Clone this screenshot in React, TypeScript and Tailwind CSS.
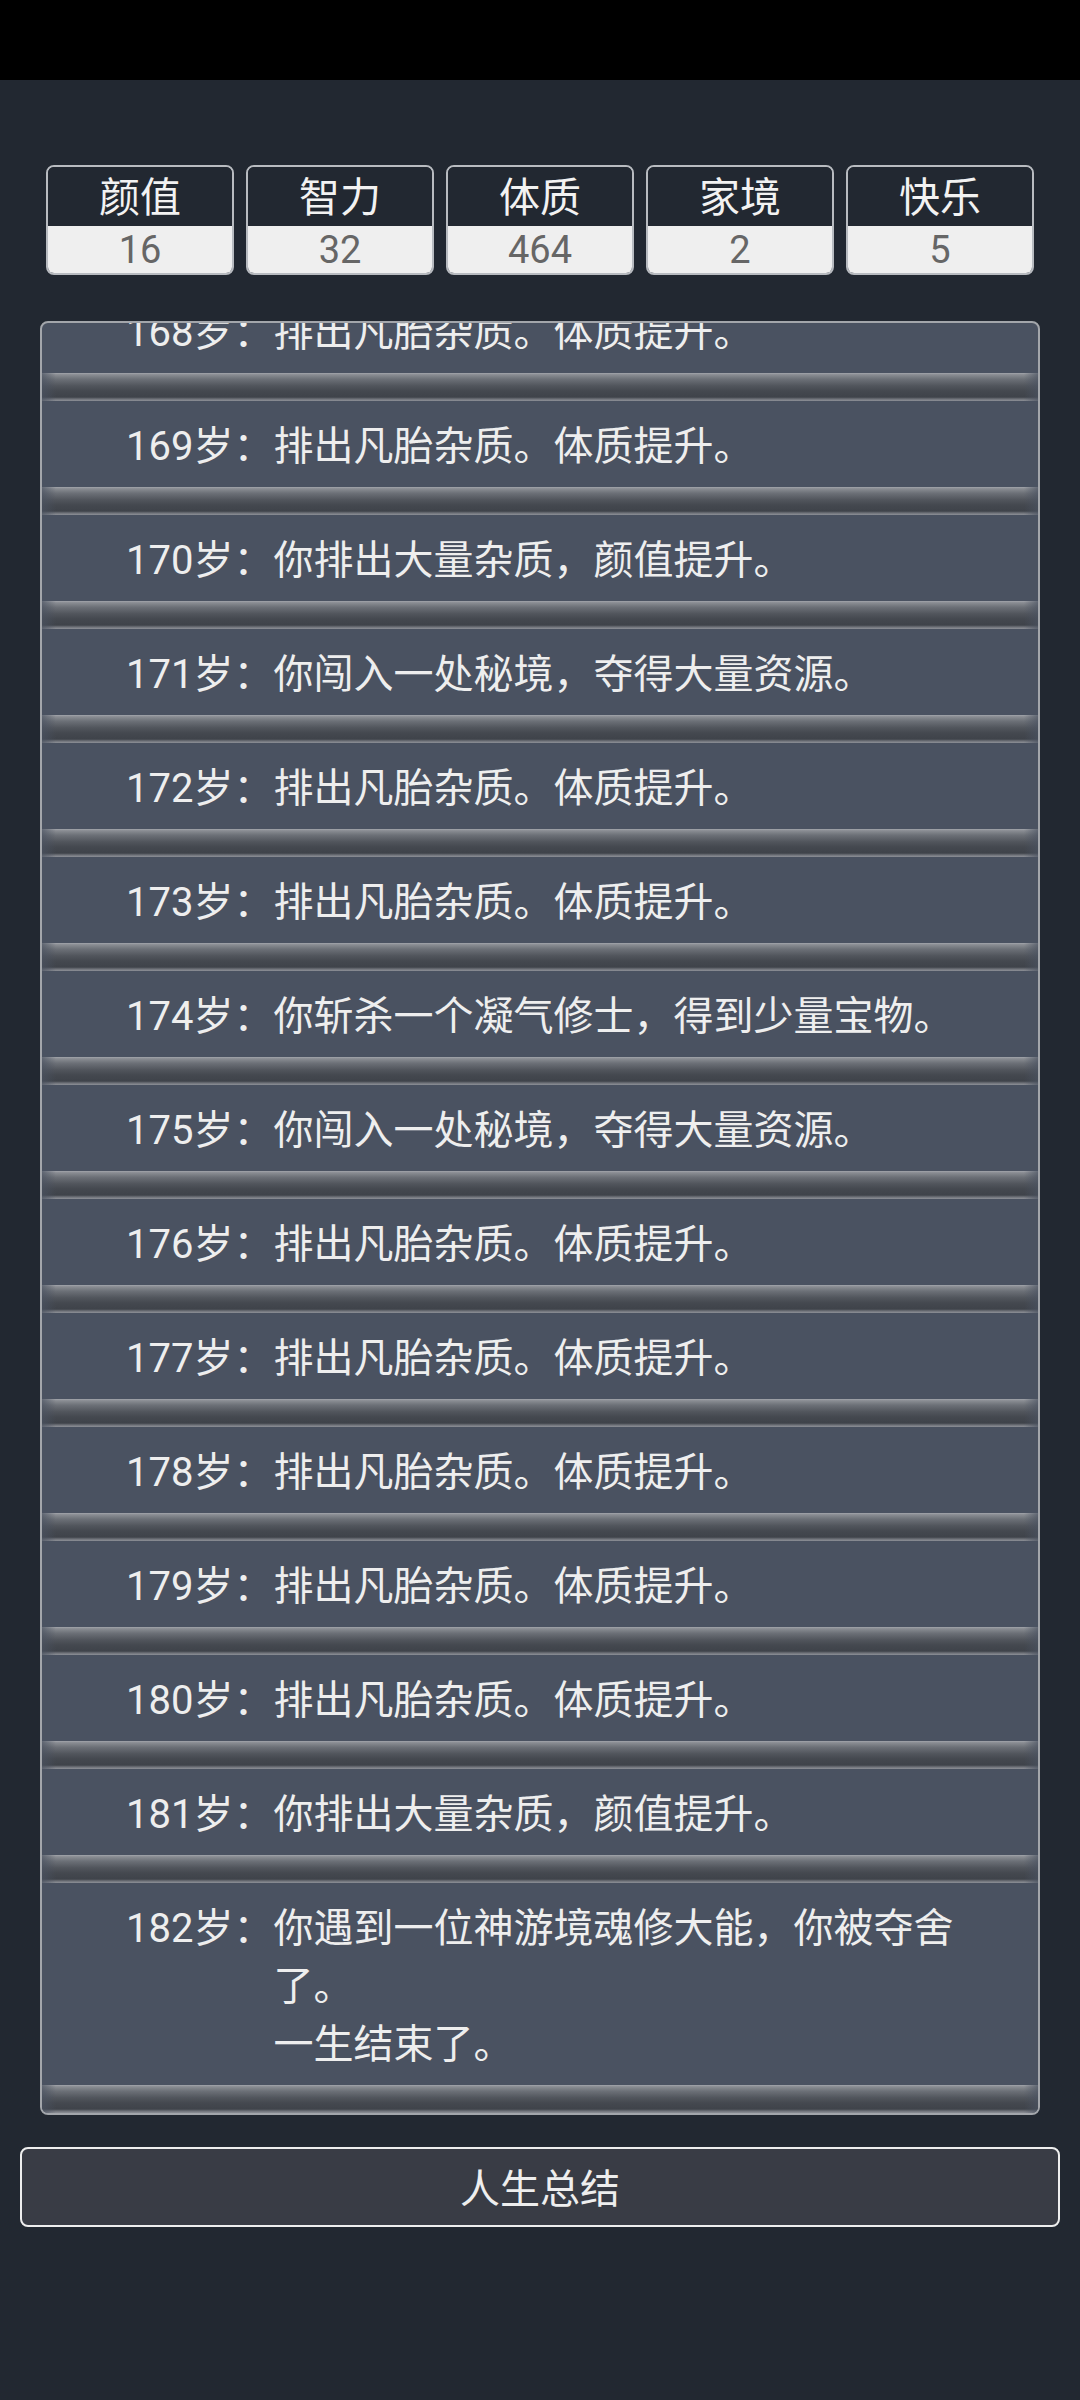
import React from "react";

const stats = [
  { label: "颜值", value: "16" },
  { label: "智力", value: "32" },
  { label: "体质", value: "464" },
  { label: "家境", value: "2" },
  { label: "快乐", value: "5" },
];

const A = "排出凡胎杂质。体质提升。";
const B = "你排出大量杂质，颜值提升。";
const C = "你闯入一处秘境，夺得大量资源。";

const rows: { age: number; lines: string[] }[] = [
  { age: 168, lines: [A] },
  { age: 169, lines: [A] },
  { age: 170, lines: [B] },
  { age: 171, lines: [C] },
  { age: 172, lines: [A] },
  { age: 173, lines: [A] },
  { age: 174, lines: ["你斩杀一个凝气修士，得到少量宝物。"] },
  { age: 175, lines: [C] },
  { age: 176, lines: [A] },
  { age: 177, lines: [A] },
  { age: 178, lines: [A] },
  { age: 179, lines: [A] },
  { age: 180, lines: [A] },
  { age: 181, lines: [B] },
  { age: 182, lines: ["你遇到一位神游境魂修大能，你被夺舍了。", "一生结束了。"] },
];

const font = "font-['Roboto','Noto_Sans_CJK_SC',sans-serif]";

export default function App() {
  return (
    <div className={`w-[1080px] h-[2400px] bg-[#222831] flex flex-col ${font}`}>
      <div className="h-[80px] bg-black shrink-0" />

      <div className="mt-[85px] px-[46px] flex gap-[12px]">
        {stats.map((s) => (
          <div
            key={s.label}
            className="flex-1 h-[110px] border-2 border-[#b8bbc0] rounded-[8px] overflow-hidden flex flex-col"
          >
            <div className="h-[59px] pt-[4px] bg-[#222831] text-[#f2f2f2] text-[41px] leading-[55px] text-center">
              {s.label}
            </div>
            <div className="h-[47px] pt-[2px] bg-[#efefef] text-[#666666] text-[38px] leading-[45px] text-center">
              {s.value}
            </div>
          </div>
        ))}
      </div>

      <div className="mt-[46px] mx-[40px] h-[1794px] border-2 border-[#a3a6ab] rounded-[8px] bg-[#4a5261] overflow-hidden flex flex-col justify-end">
        {rows.map((r) => (
          <div key={r.age} className="shrink-0 flex flex-col">
            <div className="flex pl-[84px] pr-[60px] pt-[17px] pb-[11px] text-[40px] leading-[58px] text-[#eeeeee]">
              <div className="shrink-0 whitespace-nowrap">{r.age}岁：</div>
              <div className="flex-1">
                {r.lines.map((l, i) => (
                  <div key={i}>{l}</div>
                ))}
              </div>
            </div>
            <div className="h-[28px] relative bg-[linear-gradient(to_bottom,#a2a5ab_0%,#8a8d93_6%,#6c7077_22%,#52565d_45%,#44484f_65%,#3f434a_86%,#6f7279_93%,#8d9097_100%)]">
              <div className="absolute inset-0 bg-[linear-gradient(to_right,rgba(74,82,97,0.7)_0px,rgba(74,82,97,0)_14px,rgba(74,82,97,0)_calc(100%-14px),rgba(74,82,97,0.7)_100%)]" />
            </div>
          </div>
        ))}
      </div>

      <div className="mt-[32px] mx-[20px] h-[80px] pt-[5px] shrink-0 border-2 border-[#eeeeee] rounded-[8px] bg-[#393c45] flex items-center justify-center text-[40px] text-[#eeeeee]">
        人生总结
      </div>
    </div>
  );
}
